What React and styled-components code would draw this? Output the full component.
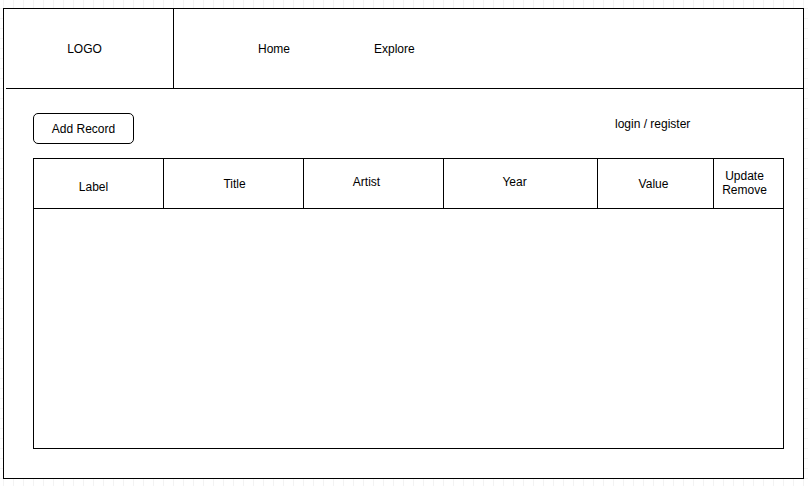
import React from "react";
import styled, { createGlobalStyle } from "styled-components";

const GlobalStyle = createGlobalStyle`
  html, body {
    margin: 0;
    padding: 0;
  }
  body {
    width: 808px;
    height: 486px;
    overflow: hidden;
    font-family: "Liberation Sans", Arial, sans-serif;
    font-size: 12px;
    color: #000;
    background-color: #fff;
    background-image:
      linear-gradient(to right, #f3f3f3 1px, transparent 1px),
      linear-gradient(to bottom, #f3f3f3 1px, transparent 1px);
    background-size: 10px 10px;
    background-position: 3px 8px;
  }
  * {
    box-sizing: border-box;
  }
`;

const shift = ({ $dx = 0, $dy = 0 }) =>
  `${$dy > 0 ? 2 * $dy : 0}px ${$dx < 0 ? -2 * $dx : 0}px ${
    $dy < 0 ? -2 * $dy : 0
  }px ${$dx > 0 ? 2 * $dx : 0}px`;

const Frame = styled.div`
  margin: 8px 0 0 3px;
  width: 801px;
  height: 471px;
  border: 1px solid #000;
  background: #fff;
  display: flex;
  flex-direction: column;
`;

const Header = styled.header`
  margin-left: 2px;
  height: 80px;
  border-bottom: 1px solid #000;
  display: flex;
`;

const LogoCell = styled.div`
  width: 168px;
  border-right: 1px solid #000;
  display: flex;
  align-items: center;
  justify-content: center;
`;

const Nav = styled.nav`
  display: flex;
  align-items: center;
  gap: 84px;
  padding-left: 84px;
`;

const NavLink = styled.a`
  color: #000;
  text-decoration: none;
  line-height: 14px;
`;

const Text = styled.span`
  display: block;
  line-height: 14px;
  text-align: center;
  margin: ${shift};
`;

const Main = styled.main`
  padding: 24px 0 0 29px;
`;

const Toolbar = styled.div`
  display: flex;
  align-items: flex-start;
`;

const Button = styled.button`
  width: 101px;
  height: 31px;
  border: 1px solid #000;
  border-radius: 5px;
  background: #fff;
  font-family: inherit;
  font-size: 12px;
  color: #000;
  padding: 0;
`;

const AuthLink = styled.a`
  margin: 4px 0 0 481px;
  color: #000;
  text-decoration: none;
  line-height: 14px;
`;

const Table = styled.div`
  margin-top: 14px;
  width: 751px;
  height: 291px;
  border: 1px solid #000;
`;

const HeadRow = styled.div`
  display: grid;
  grid-template-columns: 130px 140px 140px 154px 116px 1fr;
  height: 50px;
  border-bottom: 1px solid #000;
`;

const HeadCell = styled.div`
  border-right: 1px solid #000;
  display: flex;
  align-items: center;
  justify-content: center;
  &:last-child {
    border-right: none;
  }
`;

const columns = [
  { name: ["Label"], dx: -5, dy: 3 },
  { name: ["Title"], dx: 1, dy: 0 },
  { name: ["Artist"], dx: -7, dy: -2 },
  { name: ["Year"], dx: -6, dy: -2 },
  { name: ["Value"], dx: -2, dy: 0 },
  { name: ["Update", "Remove"], dx: -4, dy: -1 },
];

export default function App() {
  return (
    <>
      <GlobalStyle />
      <Frame>
        <Header>
          <LogoCell>
            <Text $dx={-5}>LOGO</Text>
          </LogoCell>
          <Nav>
            <NavLink href="#">Home</NavLink>
            <NavLink href="#">Explore</NavLink>
          </Nav>
        </Header>
        <Main>
          <Toolbar>
            <Button>Add Record</Button>
            <AuthLink href="#">login / register</AuthLink>
          </Toolbar>
          <Table>
            <HeadRow>
              {columns.map((col) => (
                <HeadCell key={col.name.join()}>
                  <Text $dx={col.dx} $dy={col.dy}>
                    {col.name.map((line, i) => (
                      <React.Fragment key={line}>
                        {i > 0 && <br />}
                        {line}
                      </React.Fragment>
                    ))}
                  </Text>
                </HeadCell>
              ))}
            </HeadRow>
          </Table>
        </Main>
      </Frame>
    </>
  );
}
